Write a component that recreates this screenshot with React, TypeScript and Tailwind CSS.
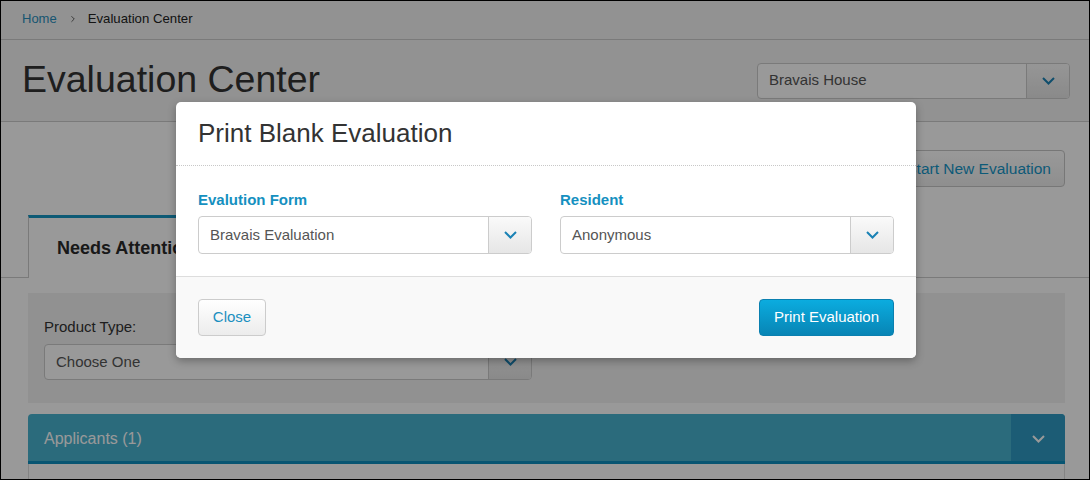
import { ChevronRight } from 'lucide-react';

// Small chevron used in the select buttons
function Chevron({ className = '' }: { className?: string }) {
  return (
    <svg width="13" height="8" viewBox="0 0 13 8" className={className} fill="none">
      <polyline points="1,1 6.5,6.5 12,1" stroke="currentColor" strokeWidth="2" />
    </svg>
  );
}

interface SelectProps {
  value: string;
  className?: string;
  height?: string;
}

function SelectBox({ value, className = '', height = 'h-[38px]' }: SelectProps) {
  return (
    <div className={`flex ${height} rounded-[4px] border border-[#cccccc] bg-white overflow-hidden ${className}`}>
      <div className="flex-1 flex items-center pl-[11px] text-[15px] text-[#555555]">{value}</div>
      <div className="w-[43px] flex items-center justify-center border-l border-[#cccccc] bg-gradient-to-b from-[#fafafa] to-[#e6e6e6] text-[#1a82b5]">
        <Chevron />
      </div>
    </div>
  );
}

export default function App() {
  return (
    <div className="relative w-[1090px] h-[480px] overflow-hidden border border-black bg-white font-['Liberation_Sans',Arial,sans-serif]">
      {/* Header block */}
      <div className="bg-[#f4f4f4]">
        <div className="h-[39px] border-b border-[#cccccc] flex items-center pl-[21px] pb-[3px] text-[13px] text-[#222222]">
          <span className="text-[#2a8fbd]">Home</span>
          <ChevronRight className="w-[10px] h-[10px] ml-[11px] mr-[10px] text-[#444444]" strokeWidth={2} />
          <span className="text-[13.2px]">Evaluation Center</span>
        </div>
        <div className="h-[82px] border-b border-[#cccccc] flex items-center justify-between pl-[21px] pr-[19px]">
          <h1 className="text-[37.5px] leading-none text-[#333333] pb-[1px]">Evaluation Center</h1>
          <SelectBox value="Bravais House" className="w-[313px]" height="h-[36px]" />
        </div>
      </div>

      {/* Content */}
      <div className="pl-[27px] pr-[24px] pt-[28px]">
        <div className="flex justify-end">
          <button className="h-[37px] pl-[12px] pr-[13px] rounded-[4px] border border-[#c6c6c6] bg-gradient-to-b from-white to-[#eeeeee] text-[15.5px] text-[#1796c8]">
            Start New Evaluation
          </button>
        </div>
      </div>

      {/* Tabs */}
      <div className="mt-[28px] flex border-b border-[#cccccc] h-[63px]">
        <div className="w-[27px]" />
        <div className="relative -mb-px w-[210px] bg-white border-l border-r border-[#cccccc] border-t-[3px] border-t-[#1696c3] flex items-center pl-[28px] text-[18px] font-bold text-[#2b2b2b]">
          Needs Attention
        </div>
        <div className="flex-1" />
      </div>

      <div className="pl-[27px] pr-[24px] pt-[15px]">
        <div className="bg-[#f2f2f2] px-[16px] pt-[24px] pb-[23px] flex">
          <div className="w-[488px]">
            <div className="text-[15px] leading-[20px] text-[#333333] mb-[7px]">Product Type:</div>
            <SelectBox value="Choose One" height="h-[36px]" />
          </div>
        </div>

        <div className="mt-[11px] flex h-[50px] rounded-t-[4px] overflow-hidden border-b-[3px] border-[#0c8ebe] bg-[#49b2cf]">
          <div className="flex-1 flex items-center pl-[16px] pt-[3px] text-[16px] text-white">Applicants (1)</div>
          <div className="w-[54px] flex items-center justify-center pt-[2px] bg-[#2f9ac3] text-white">
            <Chevron />
          </div>
        </div>
        <div className="h-[40px] border-l border-r border-[#dddddd] bg-white" />
      </div>

      {/* Backdrop */}
      <div className="absolute inset-0 bg-black/40" />

      {/* Modal */}
      <div className="absolute left-[175px] top-[101px] w-[740px] rounded-[5px] bg-white shadow-[0_3px_9px_rgba(0,0,0,0.3)] overflow-hidden">
        <div className="h-[64px] border-b border-dotted border-[#c8c8c8] flex items-center pl-[22px]">
          <h2 className="text-[26px] leading-none text-[#333333] pb-[2px]">Print Blank Evaluation</h2>
        </div>
        <div className="px-[22px] pt-[25px] pb-[22px] grid grid-cols-2 gap-[28px]">
          <div>
            <div className="text-[15px] leading-[18px] font-bold text-[#1590c0] mb-[7px]">Evalution Form</div>
            <SelectBox value="Bravais Evaluation" />
          </div>
          <div>
            <div className="text-[15px] leading-[18px] font-bold text-[#1590c0] mb-[7px]">Resident</div>
            <SelectBox value="Anonymous" />
          </div>
        </div>
        <div className="border-t border-[#dddddd] bg-[#f9f9f9] px-[22px] py-[22px] flex justify-between">
          <button className="h-[37px] w-[68px] rounded-[4px] border border-[#cccccc] bg-gradient-to-b from-white to-[#ececec] text-[15px] text-[#1a8fc0]">
            Close
          </button>
          <button className="h-[37px] w-[135px] rounded-[4px] border border-[#0a80b0] bg-gradient-to-b from-[#0bacdf] to-[#0885b5] text-[15px] text-white">
            Print Evaluation
          </button>
        </div>
      </div>
    </div>
  );
}
